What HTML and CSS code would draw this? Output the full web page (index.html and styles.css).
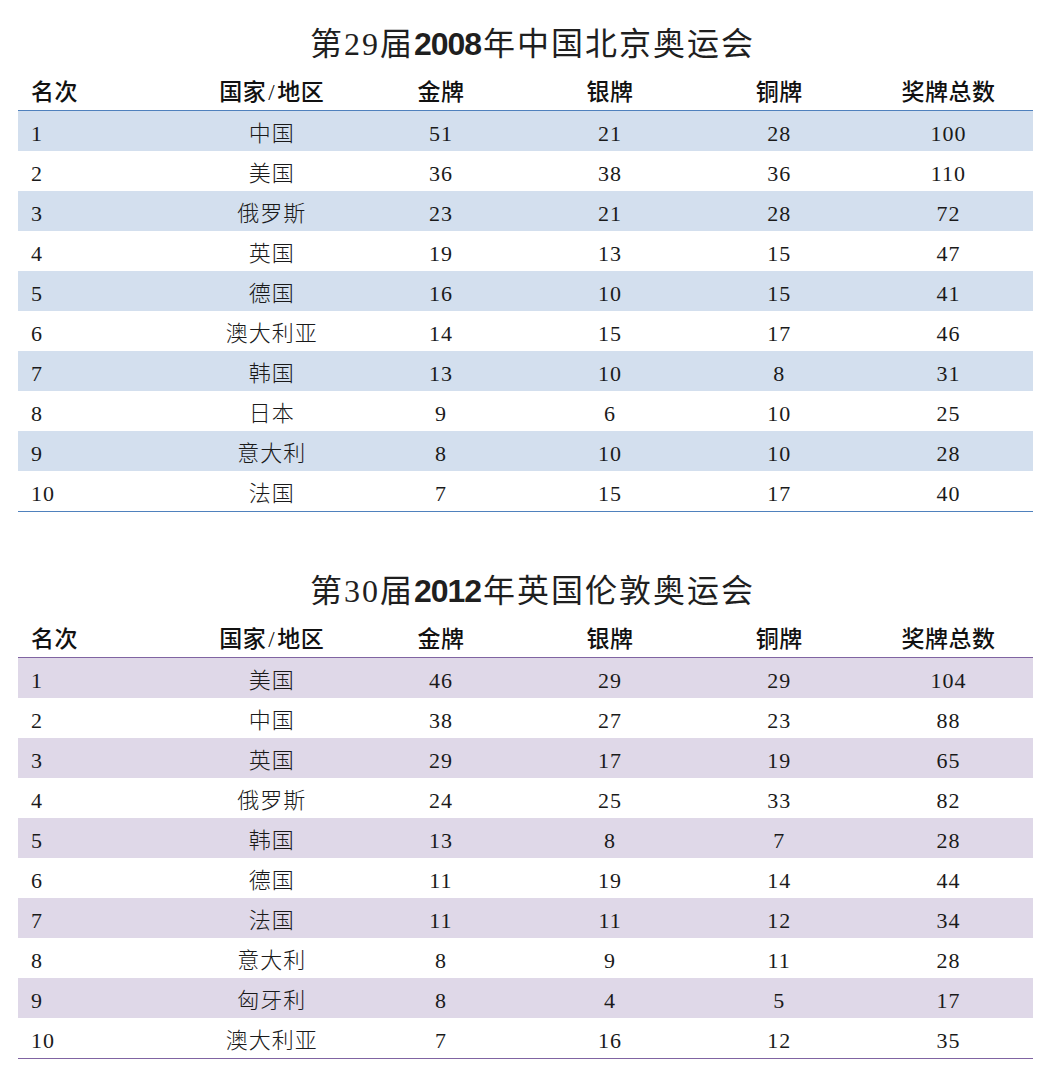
FILE: index.html
```html
<!DOCTYPE html>
<html lang="zh-CN">
<head>
<meta charset="utf-8">
<title>奥运会奖牌榜</title>
<link rel="stylesheet" href="styles.css">
</head>
<body>
<div class="page">
  <section class="medal blue">
    <h2 class="title">第<span class="num">29</span>届<span class="bold">2008</span>年中国北京奥运会</h2>
    <table>
      <thead>
        <tr><th class="first">名次</th><th>国家<span class="slash">/</span>地区</th><th>金牌</th><th>银牌</th><th>铜牌</th><th>奖牌总数</th></tr>
      </thead>
      <tbody>
        <tr><td class="first">1</td><td>中国</td><td>51</td><td>21</td><td>28</td><td>100</td></tr>
        <tr><td class="first">2</td><td>美国</td><td>36</td><td>38</td><td>36</td><td>110</td></tr>
        <tr><td class="first">3</td><td>俄罗斯</td><td>23</td><td>21</td><td>28</td><td>72</td></tr>
        <tr><td class="first">4</td><td>英国</td><td>19</td><td>13</td><td>15</td><td>47</td></tr>
        <tr><td class="first">5</td><td>德国</td><td>16</td><td>10</td><td>15</td><td>41</td></tr>
        <tr><td class="first">6</td><td>澳大利亚</td><td>14</td><td>15</td><td>17</td><td>46</td></tr>
        <tr><td class="first">7</td><td>韩国</td><td>13</td><td>10</td><td>8</td><td>31</td></tr>
        <tr><td class="first">8</td><td>日本</td><td>9</td><td>6</td><td>10</td><td>25</td></tr>
        <tr><td class="first">9</td><td>意大利</td><td>8</td><td>10</td><td>10</td><td>28</td></tr>
        <tr><td class="first">10</td><td>法国</td><td>7</td><td>15</td><td>17</td><td>40</td></tr>
      </tbody>
    </table>
  </section>
  <section class="medal purple">
    <h2 class="title">第<span class="num">30</span>届<span class="bold">2012</span>年英国伦敦奥运会</h2>
    <table>
      <thead>
        <tr><th class="first">名次</th><th>国家<span class="slash">/</span>地区</th><th>金牌</th><th>银牌</th><th>铜牌</th><th>奖牌总数</th></tr>
      </thead>
      <tbody>
        <tr><td class="first">1</td><td>美国</td><td>46</td><td>29</td><td>29</td><td>104</td></tr>
        <tr><td class="first">2</td><td>中国</td><td>38</td><td>27</td><td>23</td><td>88</td></tr>
        <tr><td class="first">3</td><td>英国</td><td>29</td><td>17</td><td>19</td><td>65</td></tr>
        <tr><td class="first">4</td><td>俄罗斯</td><td>24</td><td>25</td><td>33</td><td>82</td></tr>
        <tr><td class="first">5</td><td>韩国</td><td>13</td><td>8</td><td>7</td><td>28</td></tr>
        <tr><td class="first">6</td><td>德国</td><td>11</td><td>19</td><td>14</td><td>44</td></tr>
        <tr><td class="first">7</td><td>法国</td><td>11</td><td>11</td><td>12</td><td>34</td></tr>
        <tr><td class="first">8</td><td>意大利</td><td>8</td><td>9</td><td>11</td><td>28</td></tr>
        <tr><td class="first">9</td><td>匈牙利</td><td>8</td><td>4</td><td>5</td><td>17</td></tr>
        <tr><td class="first">10</td><td>澳大利亚</td><td>7</td><td>16</td><td>12</td><td>35</td></tr>
      </tbody>
    </table>
  </section>
</div>
</body>
</html>
```

FILE: styles.css
```css
html, body {
  margin: 0;
  padding: 0;
  background: #ffffff;
}

body {
  font-family: "Liberation Serif", "Noto Sans CJK SC", serif;
  color: #1a1a1a;
}

.page {
  padding: 24px 20px 0 18px;
  width: 1015px;
}

.medal + .medal {
  margin-top: 59px;
}

.title {
  margin: 0;
  padding-left: 14px;
  height: 40px;
  line-height: 40px;
  font-size: 32px;
  font-weight: 400;
  text-align: center;
  color: #1f1f1f;
  white-space: nowrap;
  letter-spacing: 2px;
}

.title .num {
  font-family: "Liberation Serif", serif;
}

.title .bold {
  font-family: "Liberation Sans", sans-serif;
  font-weight: 700;
  letter-spacing: -1px;
  padding-right: 2px;
}

table {
  margin-top: 6px;
  width: 1015px;
  table-layout: fixed;
  border-collapse: separate;
  border-spacing: 0;
}

th, td {
  padding: 5px 0 0 0;
  line-height: 35px;
  text-align: center;
  white-space: nowrap;
}

th {
  font-size: 23px;
  font-weight: 500;
  color: #111111;
  letter-spacing: 0.5px;
}

th .slash {
  margin: 0 2px;
}

td {
  font-size: 22px;
  font-weight: 300;
  letter-spacing: 1px;
}

th.first, td.first {
  text-align: left;
  padding-left: 13px;
}

.blue th {
  border-bottom: 1px solid #4f81bd;
}

.blue tbody tr:nth-child(odd) td {
  background: #d3dfee;
}

.blue tbody tr:last-child td {
  border-bottom: 1px solid #4f81bd;
}

.purple th {
  border-bottom: 1px solid #8064a2;
}

.purple tbody tr:nth-child(odd) td {
  background: #dfd8e8;
}

.purple tbody tr:last-child td {
  border-bottom: 1px solid #8064a2;
}
```
